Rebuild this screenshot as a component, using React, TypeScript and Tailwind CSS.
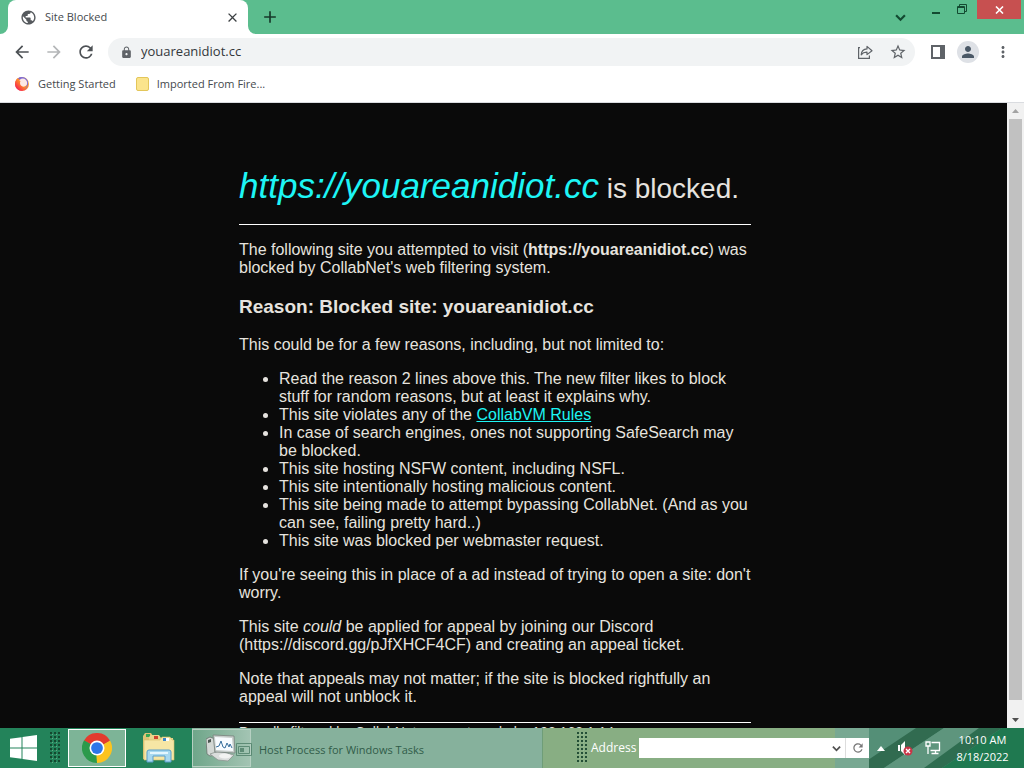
import { useState } from "react";
import {
  MdAdd,
  MdArrowBack,
  MdArrowForward,
  MdClose,
  MdLock,
  MdMoreVert,
  MdPerson,
  MdPublic,
  MdRefresh,
  MdStarBorder,
} from "react-icons/md";

function Chevron({ className }: { className?: string }) {
  return (
    <svg viewBox="0 0 10 10" className={className} fill="none" stroke="currentColor" strokeWidth="2">
      <path d="M1 3l4 4 4-4" />
    </svg>
  );
}

function ShareIcon() {
  return (
    <svg width="16" height="16" viewBox="0 0 16 16" fill="none" stroke="#5f6368" strokeWidth="1.2">
      <path d="M3 3.6H1.6V14.4H12.4V11.5" />
      <path d="M4.2 10.8C4.5 7 6.6 5.1 10 4.9V2.4L15 6.7 10 10.6V8.2C7.4 8.1 5.6 8.9 4.2 10.8Z" strokeLinejoin="round" />
    </svg>
  );
}

function SidePanelIcon() {
  return (
    <svg width="14" height="14" viewBox="0 0 14 14" fill="#5f6368">
      <path fillRule="evenodd" d="M0 0H14V14H0ZM2 2V12H9V2Z" />
    </svg>
  );
}

function FirefoxIcon() {
  return (
    <svg width="16" height="16" viewBox="0 0 16 16">
      <defs>
        <linearGradient id="fox" x1="1" y1="0" x2="0" y2="1">
          <stop offset="0" stopColor="#ffcf4a" />
          <stop offset="0.45" stopColor="#ff8a2c" />
          <stop offset="0.8" stopColor="#f7334a" />
          <stop offset="1" stopColor="#d8226c" />
        </linearGradient>
      </defs>
      <circle cx="8" cy="8" r="7" fill="url(#fox)" />
      <path d="M4 2.2C7 0 12.600 1 14 5.500 14.600 9 13 12 10.500 13.500 12.500 10 12 6 9 4.500 7 3.500 5 4 4 2.200Z" fill="#7c6ad6" />
      <circle cx="8.800" cy="7" r="4.400" fill="#fde9e4" />
      <path d="M1.200 6C2 3.500 3 2.500 3.800 2 4 4 5 4.500 6.500 5 5.500 7 6 9.500 8.500 10.500 10.500 11 12 10 13 8.500 12.500 12.500 9.500 14.800 6.500 14.500 3 14 0.500 10.500 1.200 6Z" fill="url(#fox)" />
    </svg>
  );
}

function Grip() {
  return (
    <svg width="10" height="32" viewBox="0 0 10 32">
      <defs>
        <pattern id="dots" width="4" height="4" patternUnits="userSpaceOnUse">
          <rect width="2" height="2" fill="#123d28" opacity="0.85" />
          <rect x="2" y="2" width="1" height="1" fill="#a5ceb0" opacity="0.5" />
        </pattern>
      </defs>
      <rect width="10" height="32" fill="url(#dots)" />
    </svg>
  );
}

function WindowsLogo() {
  return (
    <svg width="28" height="26" viewBox="0 0 28 26" fill="#fff">
      <path d="M0 3.800L11.500 2.200V12.500H0ZM12.500 2L27 0V12.500H12.500ZM0 13.500H11.500V23.800L0 22.200ZM12.500 13.500H27V26L12.500 24Z" />
    </svg>
  );
}

function ChromeLogo() {
  return (
    <svg width="30" height="30" viewBox="0 0 48 48">
      <path d="M24 24L3.200 12A24 24 0 0 1 44.800 12Z" fill="#e33b2e" />
      <path d="M24 24L44.800 12A24 24 0 0 1 24 48Z" fill="#fcc31e" />
      <path d="M24 24L24 48A24 24 0 0 1 3.200 12Z" fill="#2c9a4b" />
      <path d="M24 12H44.800L34 18Z" fill="#e33b2e" />
      <path d="M34.400 30L24 48 23 36Z" fill="#fcc31e" />
      <path d="M13.600 30L3.200 12 14 18Z" fill="#2c9a4b" />
      <circle cx="24" cy="24" r="12" fill="#fff" />
      <circle cx="24" cy="24" r="9.400" fill="#2d76e8" />
    </svg>
  );
}

function ExplorerLogo() {
  return (
    <svg width="32" height="30" viewBox="0 0 32 30">
      <path d="M0 3L2 0H8L10 3V26H0Z" fill="#dcc477" />
      <rect x="3" y="1" width="4" height="3" fill="#36a853" />
      <path d="M6 4L8 2H16L18 5H30V27H6Z" fill="#e9d58c" />
      <rect x="11" y="3" width="4" height="3" fill="#d0452f" />
      <path d="M1 7H17L19 4H27L29 7H31V27H1Z" fill="#f6e6a5" stroke="#d9be69" strokeWidth="0.600" />
      <rect x="20" y="5" width="6" height="3" fill="#fff" />
      <rect x="20" y="5" width="3" height="3" fill="#3c85c8" />
      <path d="M4 29V19Q4 17 6 17H26Q28 17 28 19V29H22V23H10V29Z" fill="#a7d8ef" stroke="#5b9ecb" />
      <path d="M7 20H25" stroke="#e3f6fe" strokeWidth="2" />
    </svg>
  );
}

function HostLogo() {
  return (
    <svg width="32" height="28" viewBox="0 0 32 28">
      <path d="M0 5L4 3 9 5V21L4 22 1 20Z" fill="#d3d8d5" stroke="#69736e" strokeWidth="0.800" />
      <path d="M2 6L5 5V8L2 9Z" fill="#4a5550" />
      <path d="M4 20L13 17 28 21 22 27 12 26Z" fill="#dadddc" stroke="#8d9692" strokeWidth="0.800" />
      <path d="M7 1L28 2 29 19 9 18Z" fill="#c8cecc" stroke="#77817c" strokeWidth="0.800" />
      <path d="M9 3L26 4 27 17 10 16Z" fill="#f8fcff" />
      <path d="M10 13L13 12 15 7 17 13 19 14 21 9 23 13 24 10 26 14" fill="none" stroke="#386f9d" />
      <ellipse cx="19" cy="22" rx="6" ry="2.500" fill="#f2f3f2" />
    </svg>
  );
}

function WindowGhost() {
  return (
    <svg width="16" height="13" viewBox="0 0 16 13" fill="none" stroke="#4f7f69" opacity="0.8">
      <path d="M.5 .5H15.500V12.500H.5ZM2.500 3.500H13.500V10.500H2.500Z" />
      <path d="M4 5H8V9H4Z" fill="#4f7f69" stroke="none" />
    </svg>
  );
}

// Wallpaper showing through the glass taskbar
function TaskbarGlass() {
  return (
    <svg className="absolute right-0 top-0 h-full w-[190px]" viewBox="0 0 190 40" preserveAspectRatio="none">
      <rect width="190" height="40" fill="#78a892" />
      <path d="M28 0H190V40H28Z" fill="#548f77" />
      <path d="M82 0H110L50 40H34V32Z" fill="#316b50" />
      <path d="M110 0H145L95 40H50Z" fill="#5e957d" />
      <path d="M145 0H168L108 40H90Z" fill="#2e6d50" />
      <path d="M168 0H190V40H108Z" fill="#1f7950" />
    </svg>
  );
}

function Tray() {
  return (
    <div className="flex items-center gap-3">
      <button aria-label="Show hidden icons">
        <svg width="8" height="5" viewBox="0 0 8 5" fill="#fff">
          <path d="M4 0L8 5H0Z" />
        </svg>
      </button>
      <button aria-label="Volume">
        <svg width="16" height="16" viewBox="0 0 16 16">
          <path d="M1 5H3V11H1ZM4 5L8 1V15L4 11Z" fill="#fff" />
          <circle cx="11" cy="11" r="4.500" fill="#c93547" />
          <path d="M9 9L13 13M13 9L9 13" stroke="#fff" strokeWidth="1.400" />
        </svg>
      </button>
      <button aria-label="Network">
        <svg width="16" height="14" viewBox="0 0 16 14" fill="none" stroke="#fff" strokeWidth="1.300">
          <path d="M6.500 1.500H14.500V9.500H5.500M10.500 9.500V12.500M6.500 12.500H13.500" />
          <path d="M1 1H5V5H1ZM3 5V13" />
        </svg>
      </button>
    </div>
  );
}

function TabStrip() {
  return (
    <header className="flex h-[34px] shrink-0 bg-[#5bbd8e]">
      <div className="relative ml-2 flex w-[240px] items-center rounded-t-lg bg-white pl-3 pr-2">
        <svg className="absolute -left-2 bottom-0" width="8" height="8" fill="#fff">
          <path d="M8 0V8H0A8 8 0 0 0 8 0Z" />
        </svg>
        <svg className="absolute -right-2 bottom-0" width="8" height="8" fill="#fff">
          <path d="M0 0V8H8A8 8 0 0 1 0 0Z" />
        </svg>
        <MdPublic size={17} color="#55595d" />
        <span className="ml-2 flex-1 text-[11px] text-[#45494d]">Site Blocked</span>
        <button aria-label="Close tab">
          <MdClose size={15} color="#3c4043" />
        </button>
      </div>
      <button aria-label="New tab" className="ml-3">
        <MdAdd size={20} color="#17382a" />
      </button>
      <div className="ml-auto flex items-start">
        <button aria-label="Search tabs" className="mr-4 mt-3 text-[#134a31]">
          <Chevron className="size-[11px]" />
        </button>
        <button aria-label="Minimize" className="flex h-[18px] w-7 items-center justify-center">
          <span className="mt-2 h-[2px] w-2 bg-[#134a31]" />
        </button>
        <button aria-label="Restore" className="flex h-[18px] w-6 items-center justify-center">
          <svg width="10" height="10" viewBox="0 0 10 10" fill="none" stroke="#134a31">
            <path d="M.5 2.500H7.500V9.500H.5ZM.5 3.500H7.500M2.500 2.500V.5H9.500V7.500H7.500" />
          </svg>
        </button>
        <button aria-label="Close" className="ml-[3px] mr-[3px] flex h-[19px] w-[44px] items-center justify-center bg-[#c75050]">
          <svg width="9" height="8" viewBox="0 0 9 8" stroke="#fff" strokeWidth="1.600">
            <path d="M1 0.500L8 7.500M8 0.500L1 7.500" />
          </svg>
        </button>
      </div>
    </header>
  );
}

function Toolbar() {
  const [url, setUrl] = useState("youareanidiot.cc");

  return (
    <div className="flex h-[36px] shrink-0 items-center bg-white pl-3 pr-3">
      <div className="flex items-center gap-3">
        <button aria-label="Back"><MdArrowBack size={20} color="#4d5155" /></button>
        <button aria-label="Forward"><MdArrowForward size={20} color="#b4b6b8" /></button>
        <button aria-label="Reload"><MdRefresh size={20} color="#4d5155" /></button>
      </div>
      <div className="ml-3 flex h-7 flex-1 items-center rounded-full bg-[#f1f3f4] pl-3 pr-2">
        <MdLock size={13} color="#5f6368" />
        <input
          aria-label="Address and search bar"
          className="ml-2 min-w-0 flex-1 bg-transparent text-[13px] text-[#33373b] outline-none"
          value={url}
          onChange={(e) => setUrl(e.target.value)}
        />
        <button aria-label="Share this page"><ShareIcon /></button>
        <button aria-label="Bookmark this tab" className="ml-4"><MdStarBorder size={18} color="#5f6368" /></button>
      </div>
      <div className="flex items-center gap-3 pl-4">
        <button aria-label="Side panel"><SidePanelIcon /></button>
        <button aria-label="Profile" className="flex size-[22px] items-center justify-center rounded-full bg-[#dee1e6]">
          <MdPerson size={18} color="#4a5866" />
        </button>
        <button aria-label="Menu" className="ml-[3px]"><MdMoreVert size={18} color="#5f6368" /></button>
      </div>
    </div>
  );
}

function BookmarksBar() {
  return (
    <nav className="flex h-[33px] shrink-0 items-center gap-5 border-b border-[#dadce0] bg-white pb-1 pl-[14px] text-[11px] text-[#45494d]">
      <a href="#" className="flex items-center gap-2">
        <FirefoxIcon />
        Getting Started
      </a>
      <button className="flex items-center gap-2">
        <span className="h-[14px] w-[13px] rounded-xs border border-[#e3c65a] bg-[#fbe48c]" />
        Imported From Fire...
      </button>
    </nav>
  );
}

function Scrollbar() {
  return (
    <div className="flex w-[17px] shrink-0 flex-col items-center bg-[#f1f1f1]">
      <button aria-label="Scroll up" className="flex h-4 items-center">
        <svg width="7" height="4" fill="#a3a3a3"><path d="M3.500 0L7 4H0Z" /></svg>
      </button>
      <div className="w-[13px] flex-1 bg-[#c1c1c1]" />
      <div className="h-3" />
      <button aria-label="Scroll down" className="flex h-4 items-center">
        <svg width="7" height="4" fill="#505050"><path d="M0 0H7L3.500 4Z" /></svg>
      </button>
    </div>
  );
}

function BlockedPage() {
  return (
    <main className="flex flex-1 justify-center overflow-hidden bg-[#0a0a0a] pr-[17px] pt-16 font-['Liberation_Sans',Arial,sans-serif] text-[16px] leading-[18px] text-[#e6e3df]">
      <div className="w-full max-w-[512px]">
        <h1 className="text-[28px] leading-[38px]">
          <em className="text-[35px] text-[#1df5f5]">https://youareanidiot.cc</em> is blocked.
        </h1>
        <hr className="my-4 border-white" />
        <p>
          The following site you attempted to visit (<b>https://youareanidiot.cc</b>) was blocked by
          CollabNet's web filtering system.
        </p>
        <h3 className="my-[18px] text-[19px] font-bold leading-[23px]">
          Reason: Blocked site: youareanidiot.cc
        </h3>
        <p>This could be for a few reasons, including, but not limited to:</p>
        <ul className="my-4 list-disc pl-10">
          <li>
            Read the reason 2 lines above this. The new filter likes to block stuff for random
            reasons, but at least it explains why.
          </li>
          <li>
            This site violates any of the <a href="#" className="text-[#1df5f5] underline">CollabVM Rules</a>
          </li>
          <li>In case of search engines, ones not supporting SafeSearch may be blocked.</li>
          <li>This site hosting NSFW content, including NSFL.</li>
          <li>This site intentionally hosting malicious content.</li>
          <li>
            This site being made to attempt bypassing CollabNet. (And as you can see, failing pretty
            hard..)
          </li>
          <li>This site was blocked per webmaster request.</li>
        </ul>
        <p>If you're seeing this in place of a ad instead of trying to open a site: don't worry.</p>
        <p className="my-4">
          This site <i>could</i> be applied for appeal by joining our Discord
          (https://discord.gg/pJfXHCF4CF) and creating an appeal ticket.
        </p>
        <p>
          Note that appeals may not matter; if the site is blocked rightfully an appeal will not
          unblock it.
        </p>
        <hr className="mt-4 border-white" />
        <p className="text-[14px]">Proudly filtered by CollabNet, request made by 192.168.1.14</p>
      </div>
    </main>
  );
}

function Taskbar() {
  return (
    <footer className="relative flex h-10 shrink-0 bg-[#23835a] text-[11px] text-white">
      <TaskbarGlass />
      <div className="relative flex flex-1">
        <button aria-label="Start" className="flex w-[47px] items-center justify-center">
          <WindowsLogo />
        </button>
        <div className="flex w-[21px] items-center pl-[3px]"><Grip /></div>
        <button aria-label="Google Chrome" className="my-px flex w-[58px] items-center justify-center border border-white bg-[#7db497]">
          <ChromeLogo />
        </button>
        <button aria-label="File Explorer" className="flex w-[66px] items-center justify-center">
          <ExplorerLogo />
        </button>
        <div className="relative flex w-[350px] items-center bg-[#86b19c]">
          <button aria-label="Task Host" className="flex h-[38px] w-[59px] items-center justify-center border border-[#b6d0c2] bg-linear-to-r from-[#6fa68a] to-[#a3c4b3]">
            <HostLogo />
          </button>
          <span className="absolute bottom-3 left-11"><WindowGhost /></span>
          <span className="ml-2 mt-1 text-[#315c49]">Host Process for Windows Tasks</span>
        </div>
        <div className="flex flex-1 items-center border-l border-[#6f9d78] bg-[#88ae83] pl-[34px]">
          <Grip />
          <label htmlFor="address" className="ml-1 text-[12px] font-medium">Address</label>
        </div>
        <div className="flex items-center bg-linear-to-r from-[#88ae83] from-85% to-[#78a892] to-85%">
          <div className="flex h-5 w-[230px] items-center bg-white text-[#505050]">
            <input id="address" className="h-full min-w-0 flex-1 px-1 text-[12px] text-black outline-none" />
            <button aria-label="Address history" className="mr-1"><Chevron className="size-[9px]" /></button>
            <button aria-label="Go" className="flex h-full w-6 items-center justify-center border-l border-[#dddddd]">
              <MdRefresh size={14} color="#777" />
            </button>
          </div>
        </div>
        <div className="flex items-center pl-2">
          <Tray />
        </div>
        <div className="flex w-[83px] flex-col justify-center text-center leading-[17px]">
          <time>10:10 AM</time>
          <time>8/18/2022</time>
        </div>
      </div>
    </footer>
  );
}

export default function App() {
  return (
    <div className="flex h-screen flex-col overflow-hidden font-['Open_Sans','Noto_Sans',sans-serif]">
      <TabStrip />
      <Toolbar />
      <BookmarksBar />
      <div className="flex min-h-0 flex-1">
        <BlockedPage />
        <Scrollbar />
      </div>
      <Taskbar />
    </div>
  );
}
